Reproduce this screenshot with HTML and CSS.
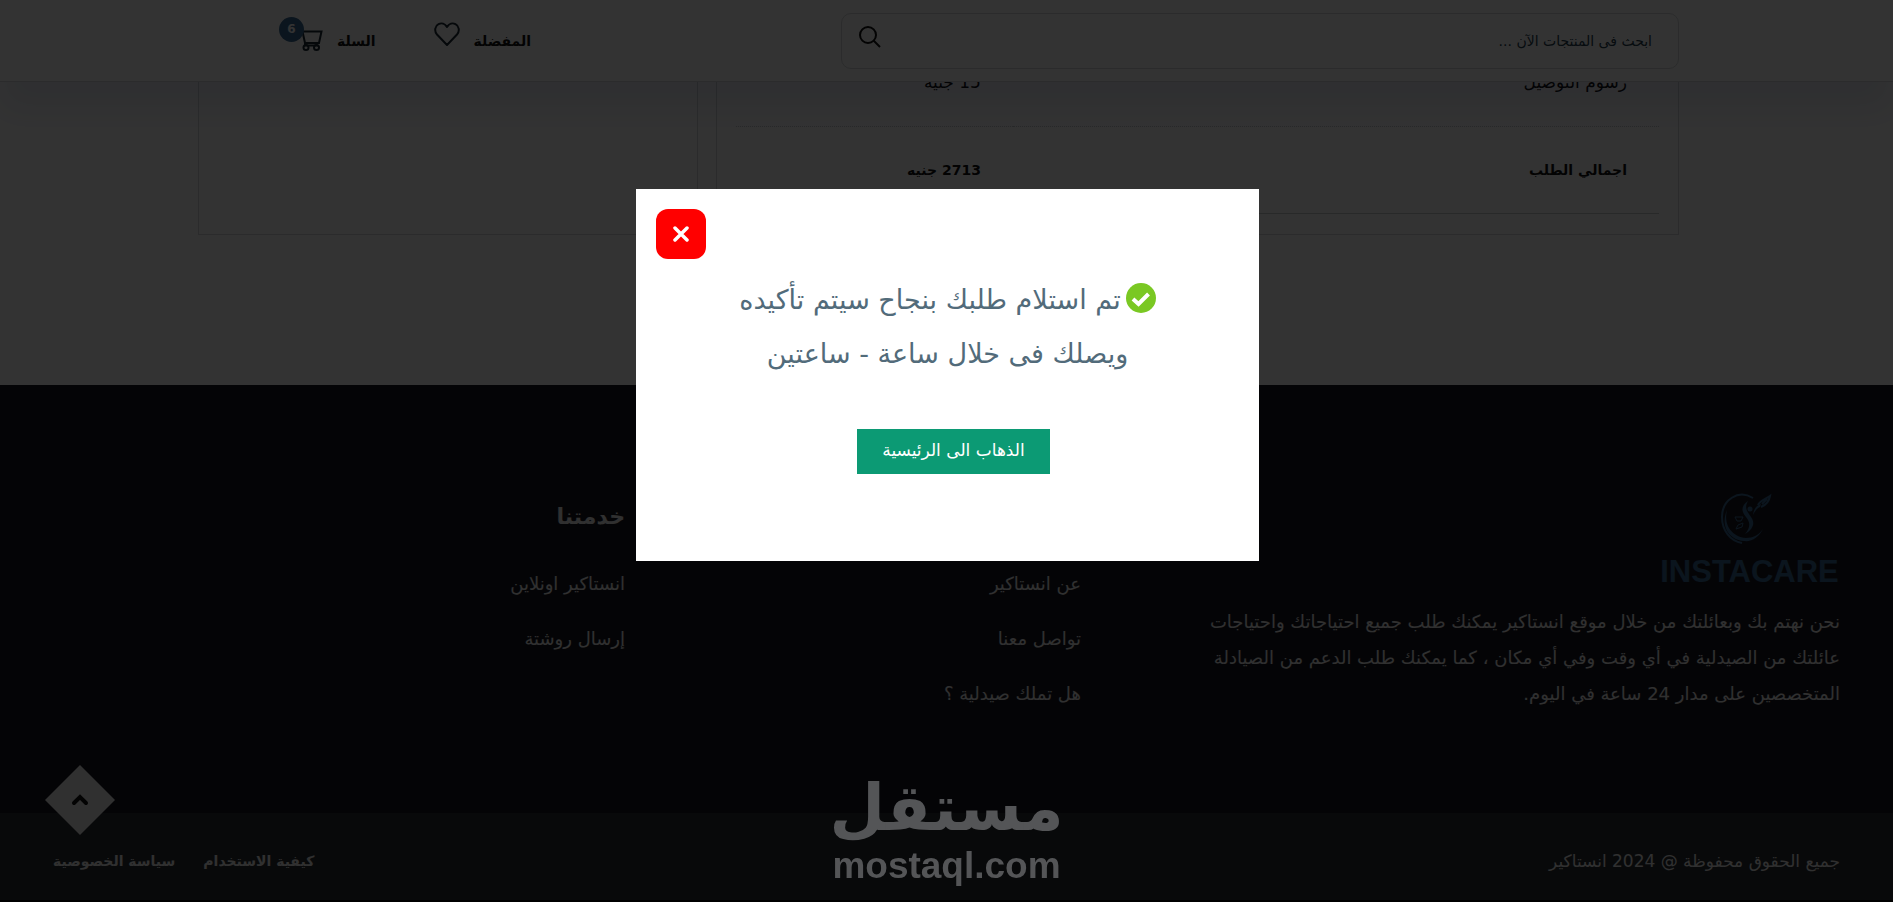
FILE: index.html
```
<!DOCTYPE html>
<html lang="ar" dir="rtl">
<head>
    <meta charset="UTF-8">
    <meta name="viewport" content="width=device-width, initial-scale=1.0">
    <title>انستاكير</title>

    <link rel="stylesheet" href="styles.css">
</head>

<body>
    <header class="header">
        <form class="search">
            <input class="search_input" type="search" placeholder="ابحث فى المنتجات الآن ..." aria-label="ابحث">
            <button class="search_button" type="button" aria-label="بحث">
                <svg width="22" height="22" viewBox="0 0 22 22" fill="none" stroke="#111" stroke-width="2">
                    <circle cx="9" cy="9" r="8"/>
                    <path d="M14.5 14.5L21 21"/>
                </svg>
            </button>
        </form>
        <nav class="header_links">
            <a class="header_link fav" href="#">المفضلة
                <svg width="26" height="24" viewBox="0 0 26 24" fill="none" stroke="#1a2a36" stroke-width="2" stroke-linejoin="round">
                    <path d="M13 23L3 12.5C0 9 1 4 4.5 2.2C7.5 .5 11 1.5 13 5C15 1.5 18.5 .5 21.5 2.2C25 4 26 9 23 12.5Z"/>
                </svg>
            </a>
            <a class="header_link cart" href="#">السلة
                <span class="cart_icon">
                    <svg width="22" height="21" viewBox="0 0 22 21" fill="none" stroke="#1a2a36" stroke-width="2">
                        <path d="M0 1.5H20.5L18 13H4L1.5 1.5M4 12.5V15.5H17"/>
                        <circle cx="5" cy="17.5" r="2.5"/>
                        <circle cx="15.5" cy="17.5" r="2.5"/>
                    </svg>
                    <span class="badge">6</span>
                </span>
            </a>
        </nav>
    </header>

    <main class="checkout">
        <section class="box summary">
            <table class="totals">
                <tr>
                    <th scope="row">رسوم التوصيل</th>
                    <td>15 جنيه</td>
                </tr>
                <tr class="total">
                    <th scope="row">اجمالي الطلب</th>
                    <td>2713 جنيه</td>
                </tr>
            </table>
        </section>
        <section class="box side"></section>
    </main>

    <footer class="footer">
        <div class="footer_columns">
            <div class="about">
                <div class="brand">
                    <svg class="brand_mark" width="54" height="52" viewBox="0 0 54 52">
                        <g fill="#3a6a94">
                            <!-- crescent -->
                            <path d="M8 18C4 34 14 45 27 46C34 46 40 43 44 37C40 45 33 50 25 49C10 48 1 34 8 18Z"/>
                            <!-- figure -->
                            <path d="M29 9C22 14 22 19 27 25C32 31 31 36 26 42C35 37 36 30 32 25C28 19 25 16 29 9Z"/>
                            <circle cx="31" cy="17" r="2.5"/>
                            <path d="M34 23C35 16 38 13 42 12L41 15C38 16 36 19 34 23Z"/>
                        </g>
                        <g fill="none" stroke="#3a6a94" stroke-width="2">
                            <path d="M34 6C19-3 3 8 3 25C3 38 11 49 23 51"/>
                            <path d="M39 13C41 8 47 7 51 4C50 10 47 13 42 15M43 12L48 7"/>
                            <path d="M16 25L24 25L22 29L18 29ZM17 37L19 33L24 31L23 35Z" stroke-width="1"/>
                        </g>
                    </svg>
                    <span class="brand_name">INSTACARE</span>
                </div>
                <p class="about_text">نحن نهتم بك وبعائلتك من خلال موقع انستاكير يمكنك طلب جميع احتياجاتك واحتياجات<br>عائلتك من الصيدلية في أي وقت وفي أي مكان ، كما يمكنك طلب الدعم من الصيادلة<br>المتخصصين على مدار 24 ساعة في اليوم.</p>
            </div>
            <div class="links">
                <h4>انستاكير</h4>
                <a href="#">عن انستاكير</a>
                <a href="#">تواصل معنا</a>
                <a href="#">هل تملك صيدلية ؟</a>
            </div>
            <div class="links">
                <h4>خدمتنا</h4>
                <a href="#">انستاكير اونلاين</a>
                <a href="#">إرسال روشتة</a>
            </div>
        </div>
        <div class="footer_bottom">
            <span class="copyright">جميع الحقوق محفوظة @ 2024 انستاكير</span>
            <nav class="policies">
                <a href="#">كيفية الاستخدام</a>
                <a href="#">سياسة الخصوصية</a>
            </nav>
        </div>
    </footer>

    <button class="to_top" aria-label="الى الاعلى">
        <svg width="72" height="72" viewBox="0 0 72 72">
            <path d="M36 1L71 36L36 71L1 36Z" fill="#f0f0f0"/>
            <path d="M30 39L36 33L42 39" fill="none" stroke="#111" stroke-width="4" stroke-linecap="round"/>
        </svg>
    </button>

    <div class="overlay">
        <div class="modal" role="dialog" aria-modal="true">
            <button class="close" aria-label="اغلاق">
                <svg width="16" height="16" viewBox="0 0 16 16" stroke="#fff" stroke-width="3.5" stroke-linecap="round">
                    <path d="M2 2L14 14M14 2L2 14"/>
                </svg>
            </button>
            <p class="message">
                <svg class="check" width="30" height="30" viewBox="0 0 30 30">
                    <circle cx="15" cy="15" r="15" fill="#7ac823"/>
                    <path d="M7 16L12.5 21L22.5 11" fill="none" stroke="#fff" stroke-width="4"/>
                </svg>تم استلام طلبك بنجاح سيتم تأكيده<br>ويصلك فى خلال ساعة - ساعتين
            </p>
            <button class="home_button">الذهاب الى الرئيسية</button>
        </div>
    </div>

    <div class="watermark">
        <span class="watermark_ar">مستقل</span>
        <span class="watermark_en" dir="ltr">mostaql.com</span>
    </div>
</body>
</html>
```
FILE: styles.css
```
*{
    box-sizing: border-box;
}

body{
    margin: 0;
    min-height: 100vh;
    display: flex;
    flex-direction: column;
    font-family: "DejaVu Sans", sans-serif;
    font-size: 14px;
    color: #253d4e;
    background-color: #fff;
    overflow: hidden;
}

a{
    color: inherit;
    text-decoration: none;
}

button{
    font-family: inherit;
    border: 0;
    padding: 0;
    cursor: pointer;
}

svg{
    display: block;
}

.header{
    position: relative;
    z-index: 1;
    display: flex;
    align-items: center;
    justify-content: space-between;
    height: 82px;
    padding: 0 214px 0 279px;
    background-color: #fff;
    border-bottom: 1px solid #d4d8da;
    box-shadow: 0 28px 34px rgba(24, 40, 120, 0.1);
}

    .search{
        display: flex;
        width: 838px;
        height: 56px;
        border: 1px solid #d4d8da;
        border-radius: 10px;
    }

        .search_input{
            flex: 1;
            padding: 0 26px;
            border: 0;
            background: none;
            font-family: inherit;
            font-size: 14px;
            color: #253d4e;
        }

        .search_input::placeholder{
            color: #253d4e;
        }

        .search_button{
            align-self: flex-start;
            margin: 12px 17px;
            background: none;
        }

    .header_links{
        display: flex;
        gap: 58px;
    }

        .header_link{
            display: flex;
            align-items: center;
            gap: 14px;
            font-size: 14px;
            font-weight: bold;
            color: #111;
        }

        .fav > svg{
            margin-bottom: 14px;
        }

        .cart_icon{
            position: relative;
            padding-left: 22px;
        }

            .badge{
                position: absolute;
                top: -13px;
                left: 0;
                width: 25px;
                height: 25px;
                border-radius: 50%;
                background-color: #3a6a94;
                color: #fff;
                font-size: 12px;
                line-height: 25px;
                text-align: center;
            }

.checkout{
    display: flex;
    gap: 18px;
    height: 153px;
    margin: 0 214px 150px 198px;
}

    .box{
        border: 1px solid #d4d8da;
        border-top: 0;
    }

    .summary{
        flex: 1;
        padding: 0 19px;
    }

    .side{
        width: 500px;
    }

        .totals{
            width: 100%;
            margin-top: -43px;
            border-collapse: collapse;
            font-size: 17px;
        }

            .totals th,
            .totals td{
                height: 87px;
                padding: 0 32px;
                text-align: right;
                font-weight: normal;
                color: #111;
                border-bottom: 1px dotted #c8cccd;
            }

            .totals th{
                width: 70%;
            }

            .totals .total > *{
                font-size: 14px;
                font-weight: bold;
                border-bottom-style: solid;
            }

.footer{
    flex: 1;
    display: flex;
    flex-direction: column;
    font-size: 18px;
    color: #f0f0f0;
    background-color: #181822;
    border-bottom: 2px solid #000;
}

    .footer_columns{
        flex: 1;
        display: grid;
        grid-template-columns: 759px 456px 1fr;
        padding: 107px 53px 0;
    }

        .brand{
            width: 181px;
            display: flex;
            flex-direction: column;
            align-items: center;
            gap: 10px;
            color: #3a6a94;
        }

            .brand_mark{
                margin-right: 8px;
            }

            .brand_name{
                font-family: "Liberation Sans", sans-serif;
                font-size: 31px;
                font-weight: bold;
                line-height: 36px;
            }

        .about_text{
            margin: 14px 0 0;
            line-height: 36px;
            white-space: nowrap;
        }

        .links{
            display: flex;
            flex-direction: column;
        }

            .links h4{
                margin: 7px 0 31px;
                font-size: 22px;
                line-height: 36px;
            }

            .links a{
                line-height: 36px;
                margin-bottom: 19px;
            }

    .footer_bottom{
        display: flex;
        align-items: center;
        justify-content: space-between;
        height: 87px;
        padding: 8px 53px 0;
        background-color: #282d32;
        font-size: 17px;
    }

        .policies{
            display: flex;
            gap: 28px;
            font-size: 14px;
            font-weight: bold;
        }

.to_top{
    position: fixed;
    left: 44px;
    bottom: 66px;
    background: none;
}

.overlay{
    position: fixed;
    inset: 0;
    z-index: 2;
    display: flex;
    justify-content: center;
    align-items: flex-start;
    padding: 189px 0 0 2px;
    background-color: rgba(0, 0, 0, 0.8);
}

    .modal{
        display: flex;
        flex-direction: column;
        align-items: center;
        width: 623px;
        padding: 20px 20px 87px;
        background-color: #fff;
    }

        .close{
            align-self: flex-end;
            display: flex;
            justify-content: center;
            align-items: center;
            width: 50px;
            height: 50px;
            border-radius: 12px;
            background-color: #f00;
        }

        .message{
            margin: 14px 0 48px;
            text-align: center;
            font-size: 27px;
            line-height: 54px;
            color: #526b7a;
        }

            .check{
                display: inline-block;
                margin-left: 5px;
                vertical-align: -4px;
            }

        .home_button{
            width: 193px;
            height: 45px;
            margin-right: -12px;
            padding-bottom: 4px;
            background-color: #0c9a74;
            color: #fff;
            font-size: 17px;
        }

.watermark{
    position: fixed;
    bottom: 16px;
    left: 0;
    right: 0;
    z-index: 3;
    display: flex;
    flex-direction: column;
    align-items: center;
    color: #545557;
    font-weight: bold;
    pointer-events: none;
}

    .watermark_ar{
        font-size: 64px;
        line-height: 76px;
    }

    .watermark_en{
        font-family: "Liberation Sans", sans-serif;
        font-size: 37px;
        line-height: 40px;
    }
```
